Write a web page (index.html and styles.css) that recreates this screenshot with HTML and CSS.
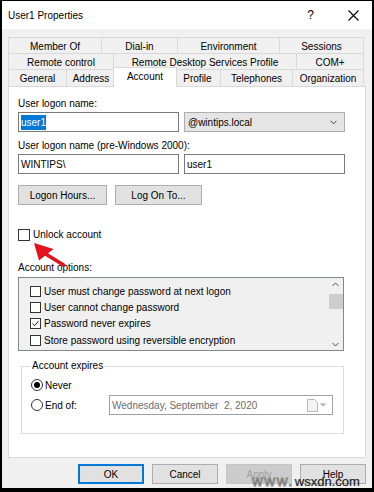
FILE: index.html
```html
<!DOCTYPE html>
<html>
<head>
<meta charset="utf-8">
<link rel="stylesheet" href="styles.css">
</head>
<body>
<div class="window">
  <div class="titlebar">
    <span class="title">User1 Properties</span>
    <span class="tb-help">?</span>
    <svg class="tb-close" width="11" height="11" viewBox="0 0 11 11"><path d="M0.5 0.5L10.5 10.5M10.5 0.5L0.5 10.5" stroke="#000" stroke-width="1.1" fill="none"/></svg>
  </div>
  <div class="client">
    <div class="tabs">
      <div class="tabrow row1">
        <div class="tab">Member Of</div>
        <div class="tab">Dial-in</div>
        <div class="tab">Environment</div>
        <div class="tab">Sessions</div>
      </div>
      <div class="tabrow row2">
        <div class="tab">Remote control</div>
        <div class="tab">Remote Desktop Services Profile</div>
        <div class="tab">COM+</div>
      </div>
      <div class="tabrow row3">
        <div class="tab">General</div>
        <div class="tab">Address</div>
        <div class="tab active">Account</div>
        <div class="tab">Profile</div>
        <div class="tab">Telephones</div>
        <div class="tab">Organization</div>
      </div>
    </div>
    <div class="panel">
      <div class="label first">User logon name:</div>
      <div class="field-row">
        <div class="textbox"><span class="sel">user1</span></div>
        <div class="combo"><span>@wintips.local</span>
          <svg width="7" height="5" viewBox="0 0 7 5"><path d="M0.5 0.8L3.5 3.8L6.5 0.8" stroke="#444" stroke-width="1" fill="none"/></svg>
        </div>
      </div>
      <div class="label second">User logon name (pre-Windows 2000):</div>
      <div class="field-row">
        <div class="textbox">WINTIPS\</div>
        <div class="textbox">user1</div>
      </div>
      <div class="btn-row">
        <div class="btn logon-hours">Logon Hours...</div>
        <div class="btn log-on-to">Log On To...</div>
      </div>
      <div class="check-row unlock">
        <span class="cbox"></span><span>Unlock account</span>
      </div>
      <div class="label options">Account options:</div>
      <div class="listbox">
        <div class="items">
          <div class="item"><span class="cbox small"></span>User must change password at next logon</div>
          <div class="item"><span class="cbox small"></span>User cannot change password</div>
          <div class="item"><span class="cbox small"><svg width="9" height="9" viewBox="0 0 9 9"><path d="M1.5 4.5L3.6 6.8L7.6 1.8" stroke="#222" stroke-width="1" fill="none"/></svg></span>Password never expires</div>
          <div class="item"><span class="cbox small"></span>Store password using reversible encryption</div>
        </div>
        <div class="scrollbar">
          <svg width="7" height="5" viewBox="0 0 7 5"><path d="M0.5 4L3.5 1L6.5 4" stroke="#555" stroke-width="1" fill="none"/></svg>
          <div class="thumb"></div>
          <div class="track"></div>
          <svg width="7" height="5" viewBox="0 0 7 5"><path d="M0.5 1L3.5 4L6.5 1" stroke="#555" stroke-width="1" fill="none"/></svg>
        </div>
      </div>
      <fieldset class="group">
        <legend>Account expires</legend>
        <div class="radio-row"><span class="radio checked"><span class="dot"></span></span>Never</div>
        <div class="radio-row">
          <span class="radio"></span><span class="endof">End of:</span>
          <div class="datebox">
            <span>Wednesday, September &nbsp;2, 2020</span>
            <span class="cal-icons">
              <svg width="11" height="13" viewBox="0 0 11 13"><path d="M0.5 0.5H7.5L10.5 3.5V12.5H0.5Z" fill="#f4f4f4" stroke="#b8b8b8" stroke-width="1"/></svg>
              <svg width="6" height="4" viewBox="0 0 6 4"><path d="M0 0.5H6L3 3.5Z" fill="#aaa"/></svg>
            </span>
          </div>
        </div>
      </fieldset>
    </div>
    <div class="footer">
      <div class="btn fbtn default">OK</div>
      <div class="btn fbtn">Cancel</div>
      <div class="btn fbtn disabled">Apply</div>
      <div class="btn fbtn">Help</div>
    </div>
  </div>
  <svg class="arrow" width="40" height="30" viewBox="0 0 40 30">
    <path d="M1 1L6 18.5L20.5 7Z" fill="#e3131b"/>
    <path d="M11 11L30.5 23" stroke="#e3131b" stroke-width="3.8" stroke-linecap="round"/>
  </svg>
  <div class="watermark"><span class="wm-www">www.</span><span class="wm-site">wsxdn.com</span></div>
</div>
</body>
</html>
```

FILE: styles.css
```css
* { box-sizing: border-box; }
html, body { margin: 0; padding: 0; }
body {
  width: 374px;
  height: 492px;
  background: #000;
  overflow: hidden;
  font-family: "Liberation Sans", Arial, sans-serif;
  font-size: 10px;
  color: #000;
}
.window {
  position: relative;
  margin: 1px 2px 0 2px;
  height: 487px;
  background: #f0f0f0;
  display: flex;
  flex-direction: column;
}
.titlebar {
  height: 28px;
  background: #fff;
  display: flex;
  align-items: center;
  padding-left: 6px;
}
.title { flex: 1; font-size: 10px; }
.tb-help { font-size: 12px; margin-right: 34px; }
.tb-close { margin-right: 13px; }

.client {
  flex: 1;
  padding: 8px 0 0 6px;
  display: flex;
  flex-direction: column;
}
.tabs { width: 356px; display: flex; flex-direction: column; }
.tabrow { display: grid; border-left: 1px solid #d9d9d9; }
.row1 { grid-template-columns: 93px 76px 102px 84px; height: 16px; }
.row2 { grid-template-columns: 105px 183px 67px; height: 16px; }
.row3 { grid-template-columns: 58px 49px 59px 46px 72px 71px; height: 17px; }
.tab {
  border-top: 1px solid #d9d9d9;
  border-right: 1px solid #d9d9d9;
  display: flex;
  align-items: center;
  justify-content: center;
  padding-top: 1px;
  white-space: nowrap;
}
.tab.active {
  background: #fff;
  margin: -2px -2px -1px -3px;
  border-left: 1px solid #d9d9d9;
  position: relative;
  z-index: 2;
  align-items: flex-start;
  padding-top: 3px;
}
.panel {
  position: relative;
  width: 358px;
  height: 372px;
  background: #fff;
  border: 1px solid #d9d9d9;
  padding-left: 9px;
  display: flex;
  flex-direction: column;
}
.label { height: 12px; line-height: 12px; }
.label.first { margin-top: 11px; }
.label.second { margin-top: 8px; }
.label.options { margin-top: 21px; }
.field-row { display: flex; gap: 5px; margin-top: 2px; }
.textbox {
  width: 161px;
  height: 20px;
  border: 1px solid #7a7a7a;
  padding-left: 2px;
  display: flex;
  align-items: center;
  background: #fff;
}
.sel { background: #0078d7; color: #fff; padding: 2px 0; }
.combo {
  width: 161px;
  height: 20px;
  border: 1px solid #adadad;
  background: #e5e5e5;
  display: flex;
  align-items: center;
  justify-content: space-between;
  padding: 0 7px 0 3px;
}
.btn-row { display: flex; gap: 8px; margin-top: 11px; }
.btn {
  height: 20px;
  background: #e1e1e1;
  border: 1px solid #adadad;
  display: flex;
  align-items: center;
  justify-content: center;
}
.logon-hours { width: 89px; }
.log-on-to { width: 87px; }
.check-row { display: flex; align-items: center; gap: 3px; }
.unlock { margin-top: 23px; height: 13px; }
.cbox {
  width: 12px;
  height: 12px;
  border: 1px solid #333;
  background: #fff;
  display: inline-flex;
  align-items: center;
  justify-content: center;
}
.cbox.small { width: 11px; height: 11px; margin-right: 3px; }
.listbox {
  margin-top: 3px;
  width: 326px;
  height: 74px;
  border: 1px solid #828790;
  background: #f0f0f0;
  display: flex;
}
.items { flex: 1; padding: 5px 0 0 11px; }
.item { height: 16.3px; display: flex; align-items: center; }
.scrollbar {
  width: 15px;
  display: flex;
  flex-direction: column;
  align-items: center;
  padding: 4px 0 3px;
}
.thumb { width: 14px; height: 15px; background: #cdcdcd; margin-top: 7px; }
.track { flex: 1; }
.group {
  margin: 10px 0 0 3px;
  width: 323px;
  height: 73px;
  border: 1px solid #dcdcdc;
  padding: 4px 0 0 9px;
}
.group legend { padding: 0 2px; margin-left: -1px; line-height: 10px; }
.radio-row { display: flex; align-items: center; height: 20px; }
.radio {
  width: 12px; height: 12px;
  border: 1px solid #333;
  border-radius: 50%;
  background: #fff;
  display: inline-flex; align-items: center; justify-content: center;
  margin-right: 2px;
}
.radio .dot { width: 6px; height: 6px; border-radius: 50%; background: #000; }
.endof { width: 64px; }
.datebox {
  width: 224px;
  height: 20px;
  border: 1px solid #a0a0a0;
  background: #fff;
  color: #6d6d6d;
  display: flex;
  align-items: center;
  justify-content: space-between;
  padding: 0 6px 0 2px;
}
.cal-icons { display: flex; align-items: center; gap: 2px; }
.footer {
  display: flex;
  justify-content: flex-end;
  gap: 8px;
  padding: 6px 6px 0 0;
}
.fbtn { width: 66px; height: 20px; }
.fbtn.default { border: 2px solid #0078d7; }
.fbtn.disabled { color: #a0a0a0; background: #cccccc; border-color: #c4c4c4; }
.arrow { position: absolute; left: 31px; top: 241px; }
.watermark {
  position: absolute;
  left: 250px;
  top: 472px;
  white-space: nowrap;
  line-height: 16px;
}
.wm-www {
  font-size: 15px;
  letter-spacing: 1.5px;
  color: rgba(255,255,255,0.4);
  -webkit-text-stroke: 0.8px #777;
}
.wm-site {
  font-size: 13px;
  color: #222;
  margin-left: 1px;
  -webkit-text-stroke: 0.2px #222;
}
```
